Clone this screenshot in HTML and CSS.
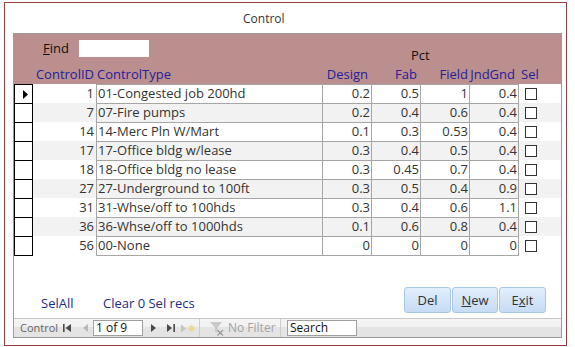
FILE: index.html
```html
<!DOCTYPE html>
<html>
<head>
<meta charset="utf-8">
<title>Control</title>
<link rel="stylesheet" href="styles.css">
</head>
<body>
<div class="window">
  <div class="title">Control</div>
  <div class="form">
    <div class="fhead">
      <div class="toprow">
        <span class="find"><u>F</u>ind</span>
        <span class="findbox"></span>
        <span class="pct">Pct</span>
      </div>
      <div class="labels grid">
        <span></span>
        <span class="r lid">ControlID</span>
        <span class="ltype">ControlType</span>
        <span class="r lp3">Design</span>
        <span class="r lp3">Fab</span>
        <span class="r lp2">Field</span>
        <span class="r lp4">JndGnd</span>
        <span class="ls">Sel</span>
      </div>
    </div>
    <div class="rows">
      <div class="row grid">
        <div class="sel"><svg class="cur" width="17" height="17" viewBox="0 0 17 17"><polygon points="8,5 13,9.5 8,14" fill="#000"/></svg></div>
        <div class="id">1</div><div class="c t">01-Congested job 200hd</div>
        <div class="c n">0.2</div><div class="c n">0.5</div><div class="c n">1</div><div class="c n j">0.4</div>
        <div class="chk"><span class="box"></span></div>
      </div>
      <div class="row grid alt">
        <div class="sel"></div>
        <div class="id">7</div><div class="c t">07-Fire pumps</div>
        <div class="c n">0.2</div><div class="c n">0.4</div><div class="c n">0.6</div><div class="c n j">0.4</div>
        <div class="chk"><span class="box"></span></div>
      </div>
      <div class="row grid">
        <div class="sel"></div>
        <div class="id">14</div><div class="c t">14-Merc Pln W/Mart</div>
        <div class="c n">0.1</div><div class="c n">0.3</div><div class="c n">0.53</div><div class="c n j">0.4</div>
        <div class="chk"><span class="box"></span></div>
      </div>
      <div class="row grid alt">
        <div class="sel"></div>
        <div class="id">17</div><div class="c t">17-Office bldg w/lease</div>
        <div class="c n">0.3</div><div class="c n">0.4</div><div class="c n">0.5</div><div class="c n j">0.4</div>
        <div class="chk"><span class="box"></span></div>
      </div>
      <div class="row grid">
        <div class="sel"></div>
        <div class="id">18</div><div class="c t">18-Office bldg no lease</div>
        <div class="c n">0.3</div><div class="c n">0.45</div><div class="c n">0.7</div><div class="c n j">0.4</div>
        <div class="chk"><span class="box"></span></div>
      </div>
      <div class="row grid alt">
        <div class="sel"></div>
        <div class="id">27</div><div class="c t">27-Underground to 100ft</div>
        <div class="c n">0.3</div><div class="c n">0.5</div><div class="c n">0.4</div><div class="c n j">0.9</div>
        <div class="chk"><span class="box"></span></div>
      </div>
      <div class="row grid">
        <div class="sel"></div>
        <div class="id">31</div><div class="c t">31-Whse/off to 100hds</div>
        <div class="c n">0.3</div><div class="c n">0.4</div><div class="c n">0.6</div><div class="c n j">1.1</div>
        <div class="chk"><span class="box"></span></div>
      </div>
      <div class="row grid alt">
        <div class="sel"></div>
        <div class="id">36</div><div class="c t">36-Whse/off to 1000hds</div>
        <div class="c n">0.1</div><div class="c n">0.6</div><div class="c n">0.8</div><div class="c n j">0.4</div>
        <div class="chk"><span class="box"></span></div>
      </div>
      <div class="row grid last">
        <div class="sel"></div>
        <div class="id">56</div><div class="c t">00-None</div>
        <div class="c n">0</div><div class="c n">0</div><div class="c n">0</div><div class="c n j">0</div>
        <div class="chk"><span class="box"></span></div>
      </div>
    </div>
    <div class="ffoot">
      <span class="lnk lnk1">SelAll</span>
      <span class="lnk">Clear 0 Sel recs</span>
      <div class="btns">
        <span class="btn b1">Del</span>
        <span class="btn b2"><u>N</u>ew</span>
        <span class="btn b3">E<u>x</u>it</span>
      </div>
    </div>
    <div class="nav">
      <span class="navlbl">Control</span>
      <svg class="ni first" width="9" height="8" viewBox="0 0 9 8"><rect x="0" y="0" width="1.6" height="8" fill="#4a4a4a"/><polygon points="8,0 2.5,4 8,8" fill="#4a4a4a"/></svg>
      <svg class="ni prev" width="5" height="8" viewBox="0 0 5 8"><polygon points="5,0 0,4 5,8" fill="#b8b8b8"/></svg>
      <span class="recbox">1 of 9</span>
      <svg class="ni next" width="5" height="8" viewBox="0 0 5 8"><polygon points="0,0 5,4 0,8" fill="#4a4a4a"/></svg>
      <svg class="ni lastr" width="8" height="8" viewBox="0 0 8 8"><polygon points="0,0 5,4 0,8" fill="#4a4a4a"/><rect x="6.4" y="0" width="1.6" height="8" fill="#4a4a4a"/></svg>
      <svg class="ni newr" width="14" height="9" viewBox="0 0 14 9"><polygon points="0,0.5 5,4.5 0,8.5" fill="#c4c4c4"/><g stroke="#ecd98a" stroke-width="1.4"><line x1="10.5" y1="1" x2="10.5" y2="8"/><line x1="7" y1="4.5" x2="14" y2="4.5"/><line x1="8" y1="2" x2="13" y2="7"/><line x1="13" y1="2" x2="8" y2="7"/></g></svg>
      <span class="nsep s1"></span>
      <svg class="ni filt" width="14" height="15" viewBox="0 0 14 15"><polygon points="0,1 12,1 7.5,6.5 7.5,12 5,10.5 5,6.5" fill="#c9c9c9"/><g stroke="#9a9a9a" stroke-width="1.3"><line x1="7.5" y1="9" x2="13" y2="14.5"/><line x1="13" y1="9" x2="7.5" y2="14.5"/></g></svg>
      <span class="nofilt">No Filter</span>
      <span class="nsep s2"></span>
      <span class="search">Search</span>
    </div>
  </div>
</div>
</body>
</html>
```
FILE: styles.css
```css
* { box-sizing: border-box; }
html, body { margin: 0; padding: 0; background: #fff; }
body {
  font-family: "Open Sans", "DejaVu Sans", sans-serif;
  font-size: 12px;
  color: #222;
}
.window {
  margin: 2px 0 0 4px;
  width: 563px;
  height: 344px;
  border: 1px solid #983f3f;
}
.title {
  height: 30px;
  padding: 8px 0 0 238px;
  line-height: 16px;
  color: #333;
}
.form {
  margin-left: 8px;
  width: 549px;
  height: 305px;
  border: 1px solid #9a9a9a;
  display: flex;
  flex-direction: column;
}
.fhead {
  background: #bc8f8f;
  height: 50px;
  flex: none;
  padding-top: 6px;
}
.toprow {
  display: flex;
  align-items: flex-start;
  height: 26px;
  font-size: 13px;
}
.find {
  margin-left: 29px;
  width: 36px;
  line-height: 17px;
  color: #111;
}
.findbox {
  width: 70px;
  height: 17px;
  background: #fff;
}
.pct {
  margin-left: 262px;
  margin-top: 7px;
  line-height: 16px;
  color: #111;
}
.grid {
  display: grid;
  grid-template-columns: 19px 63px 226px 49px 49px 49px 50px 1fr;
}
.labels {
  height: 16px;
  line-height: 16px;
  font-size: 13px;
  color: #23209a;
  white-space: nowrap;
}
.labels .r { display: flex; justify-content: flex-end; }
.lid { padding-right: 2px; }
.ltype { padding-left: 1px; }
.lp2 { padding-right: 1px; }
.lp3 { padding-right: 3px; }
.lp4 { padding-right: 4px; }
.ls { padding-left: 2px; }

.rows { flex: none; }
.row {
  height: 19px;
  line-height: 17px;
  font-size: 13px;
  color: #333;
  white-space: nowrap;
}
.row.alt { background: #f2f2f2; }
.row.last { height: 20px; }
.sel {
  background: #fff;
  border-left: 1px solid #000;
  border-right: 1px solid #000;
  border-top: 1px solid #000;
}
.cur { display: block; }
.id {
  text-align: right;
  padding: 1px 2px 0 0;
}
.c {
  border-left: 1px solid #a6a6a6;
  border-top: 1px solid #a6a6a6;
  overflow: hidden;
}
.c.t { padding-left: 1px; }
.c.n { text-align: right; padding-right: 1px; }
.c.j { border-right: 1px solid #a6a6a6; }
.last .sel { border-bottom: 1px solid #000; }
.last .c { border-bottom: 1px solid #a6a6a6; }
.chk { padding: 4px 0 0 6px; }
.box {
  display: block;
  width: 12px;
  height: 12px;
  border: 1px solid #333;
  background: #fff;
}

.ffoot {
  flex: 1;
  display: flex;
  align-items: flex-end;
  padding: 0 15px 5px 27px;
}
.lnk {
  line-height: 16px;
  margin-bottom: 2px;
  font-size: 13px;
  color: #1f2a85;
  white-space: nowrap;
}
.lnk1 { width: 62px; }
.btns {
  margin-left: auto;
  display: flex;
  gap: 1px;
}
.btn {
  height: 26px;
  border: 1px solid #a9c7e8;
  border-radius: 3px;
  background: linear-gradient(#e2eefb, #c6dcf4);
  text-align: center;
  line-height: 24px;
  color: #333;
  font-size: 13px;
}
.b1 { width: 47px; }
.b2 { width: 46px; }
.b3 { width: 47px; }

.nav {
  flex: none;
  height: 19px;
  border-top: 1px solid #c8c8c8;
  background: linear-gradient(#f4f4f4 0, #f1f1f1 45%, #e4e4e4 46%, #e4e4e4 100%);
  display: flex;
  align-items: center;
  padding-left: 6px;
  color: #666;
  white-space: nowrap;
  font-size: 11px;
}
.navlbl { width: 37px; line-height: 16px; }
.ni { display: block; flex: none; }
.first { margin-left: 6px; }
.prev { margin-left: 11px; }
.recbox {
  margin-left: 5px;
  width: 50px;
  height: 16px;
  border: 1px solid #a0a0a0;
  background: #fff;
  color: #111;
  line-height: 14px;
  padding-left: 2px;
  font-size: 12px;
}
.next { margin-left: 8px; }
.lastr { margin-left: 11px; }
.newr { margin-left: 6px; }
.nsep {
  width: 1px;
  height: 18px;
  background: #cdcdcd;
  flex: none;
}
.s1 { margin-left: 4px; }
.filt { margin-left: 10px; }
.nofilt { margin-left: 4px; width: 44px; color: #a3a3a3; line-height: 16px; font-size: 12px; }
.s2 { margin-left: 8px; }
.search {
  margin-left: 6px;
  width: 70px;
  height: 16px;
  border: 1px solid #a0a0a0;
  background: #fff;
  color: #111;
  line-height: 14px;
  padding-left: 2px;
  font-size: 12px;
}
```
